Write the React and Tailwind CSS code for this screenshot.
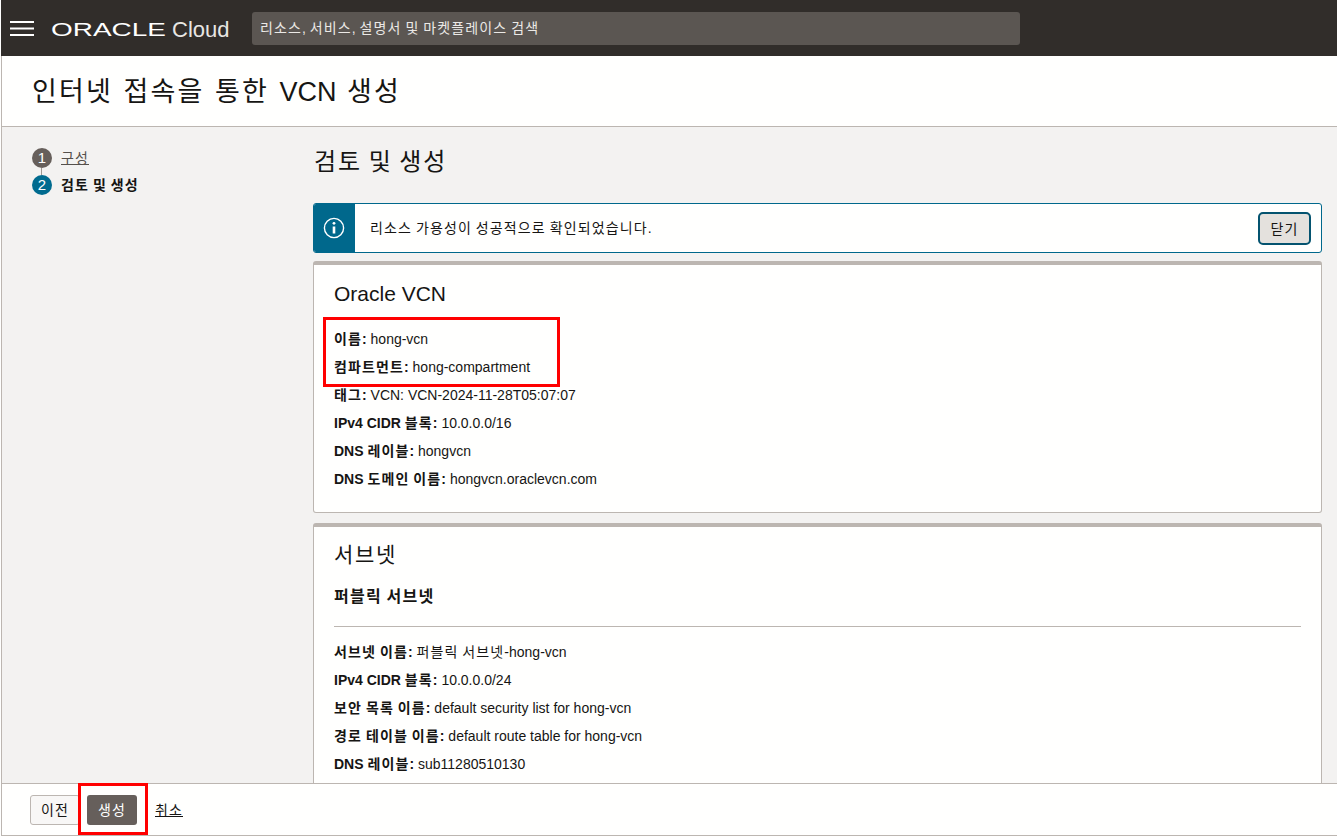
import React from "react";

const fontStack = "font-['Liberation_Sans','Noto_Sans_CJK_KR',sans-serif]";

const vcnRows = [
  ["이름:", "hong-vcn"],
  ["컴파트먼트:", "hong-compartment"],
  ["태그:", "VCN: VCN-2024-11-28T05:07:07"],
  ["IPv4 CIDR 블록:", "10.0.0.0/16"],
  ["DNS 레이블:", "hongvcn"],
  ["DNS 도메인 이름:", "hongvcn.oraclevcn.com"],
];

const subnetRows = [
  ["서브넷 이름:", "퍼블릭 서브넷-hong-vcn"],
  ["IPv4 CIDR 블록:", "10.0.0.0/24"],
  ["보안 목록 이름:", "default security list for hong-vcn"],
  ["경로 테이블 이름:", "default route table for hong-vcn"],
  ["DNS 레이블:", "sub11280510130"],
];

// hangul in the reference sets a full em wide, the installed CJK font is narrower
function Ko({ children }) {
  return children.split(/([\uAC00-\uD7A3]+)/).map((part, i) =>
    i % 2 ? (
      <span key={i} className="tracking-[0.08em]">{part}</span>
    ) : (
      part
    )
  );
}

function Row({ label, value }) {
  return (
    <div className="h-7 text-sm leading-7 text-[#161513] whitespace-nowrap">
      <b className="font-bold"><Ko>{label}</Ko></b> <Ko>{value}</Ko>
    </div>
  );
}

function Card({ className, children }) {
  return (
    <section className={`bg-[#fffffe] border border-[#bcb6b1] border-t-4 rounded-[3px] ${className}`}>
      {children}
    </section>
  );
}

export default function App() {
  return (
    <div className={`h-[837px] w-full pl-px pb-px flex flex-col overflow-hidden relative bg-[#fffffe] ${fontStack}`}>
      <header className="h-14 shrink-0 bg-[#312d2a] flex items-center pl-[9px]">
        <svg width="24" height="15" viewBox="0 0 24 15" className="shrink-0 mr-[17px] mt-[1px]">
          <path d="M0 1h24M0 7.5h24M0 14h24" stroke="#fff" strokeWidth="2" />
        </svg>
        <div className="w-[114px] h-6 shrink-0 mt-[4px] text-white">
          <span className="block origin-left scale-x-[1.47] text-[19px] leading-6 font-normal">ORACLE</span>
        </div>
        <span className="ml-[7px] w-[80px] text-[22px] leading-6 mt-[4px] text-[#e8e6e3]">Cloud</span>
        <div className="w-[768px] h-[33px] bg-[#5b5652] rounded-[3px] flex items-center pl-[8px] text-sm text-[#ebe9e6]">
          <span><Ko>리소스, 서비스, 설명서 및 마켓플레이스 검색</Ko></span>
        </div>
      </header>

      <div className="flex-1 min-h-0 flex flex-col border-l border-[#bcb6b1]">
        <div className="h-[71px] shrink-0 bg-[#fffffe] border-b border-[#bcb6b1] flex items-center pl-[30px] pt-[2px]">
          <h1 className="text-[27px] text-[#161513] font-normal [word-spacing:3px]"><Ko>인터넷 접속을 통한 VCN 생성</Ko></h1>
        </div>

        <main className="flex-1 min-h-0 flex overflow-hidden bg-[#f3f2f1]">
          <nav className="w-[311px] shrink-0 pl-[30px] pt-[21px]">
            <div className="flex items-center gap-[9px] h-5 text-sm">
              <span className="w-5 h-5 rounded-full bg-[#665f5b] text-white text-[15px] flex items-center justify-center">1</span>
              <a className="underline text-[#55504c]"><Ko>구성</Ko></a>
            </div>
            <div className="ml-[9px] w-px h-[7px] bg-[#9e9892]" />
            <div className="flex items-center gap-[9px] h-5 text-sm">
              <span className="w-5 h-5 rounded-full bg-[#006b8f] text-white text-[15px] flex items-center justify-center">2</span>
              <b className="font-bold text-[#161513]"><Ko>검토 및 생성</Ko></b>
            </div>
          </nav>

          <div className="flex-1 min-w-0 pr-[15px]">
            <h2 className="text-2xl leading-8 mt-[19px] text-[#161513] font-normal pl-px"><Ko>검토 및 생성</Ko></h2>

            <div className="mt-[25px] h-[50px] flex items-center bg-[#fffffe] border border-[#00688c] rounded-[3px] overflow-hidden">
              <div className="w-[41px] h-full bg-[#00688c] flex items-center justify-center">
                <svg width="22" height="22" viewBox="0 0 22 22" fill="none" className="mr-px">
                  <circle cx="11" cy="11" r="9.6" stroke="#fff" strokeWidth="1.4" />
                  <path d="M11 9.5v7" stroke="#fff" strokeWidth="2.6" />
                  <circle cx="11" cy="6.3" r="1.4" fill="#fff" />
                </svg>
              </div>
              <p className="flex-1 pl-[15px] text-sm text-[#161513]"><Ko>리소스 가용성이 성공적으로 확인되었습니다.</Ko></p>
              <button className="mr-[10px] w-[53px] h-[33px] mt-px rounded-[5px] bg-[#e4e1dd] border-[2px] border-[#04536f] text-sm text-[#161513]"><Ko>닫기</Ko></button>
            </div>

            <Card className="mt-[8px] h-[252px] pl-[20px] pt-[13px]">
              <h3 className="text-[21px] leading-8 text-[#161513] font-normal mb-[15px]">Oracle VCN</h3>
              {vcnRows.map(([label, value]) => (
                <Row key={label} label={label} value={value} />
              ))}
            </Card>

            <Card className="mt-[10px] h-[400px] px-[20px] pt-[12px]">
              <h3 className="text-[21px] leading-8 text-[#161513] font-normal"><Ko>서브넷</Ko></h3>
              <h4 className="mt-[14px] text-base leading-6 font-bold text-[#161513]"><Ko>퍼블릭 서브넷</Ko></h4>
              <hr className="mt-[17px] mb-[11px] border-[#bcb6b1]" />
              {subnetRows.map(([label, value]) => (
                <Row key={label} label={label} value={value} />
              ))}
            </Card>
          </div>
        </main>

        <footer className="h-[53px] shrink-0 bg-[#fffffe] border-y border-[#bcb6b1] flex items-center pl-[28px] text-sm">
          <button className="w-[50px] h-[30px] rounded-[3px] bg-[#f8f7f6] border border-[#bcb6b1] text-[#161513]"><Ko>이전</Ko></button>
          <button className="ml-[7px] w-[50px] h-[30px] rounded-[3px] bg-[#665f5b] text-white"><Ko>생성</Ko></button>
          <a className="ml-[18px] underline text-[#161513]"><Ko>취소</Ko></a>
        </footer>
      </div>

      <div className="absolute left-[323px] top-[317px] w-[237px] h-[70px] border-[3px] border-[#ff0000]" />
      <div className="absolute left-[78px] top-[783px] w-[70px] h-[52px] border-[3px] border-[#ff0000]" />
    </div>
  );
}
